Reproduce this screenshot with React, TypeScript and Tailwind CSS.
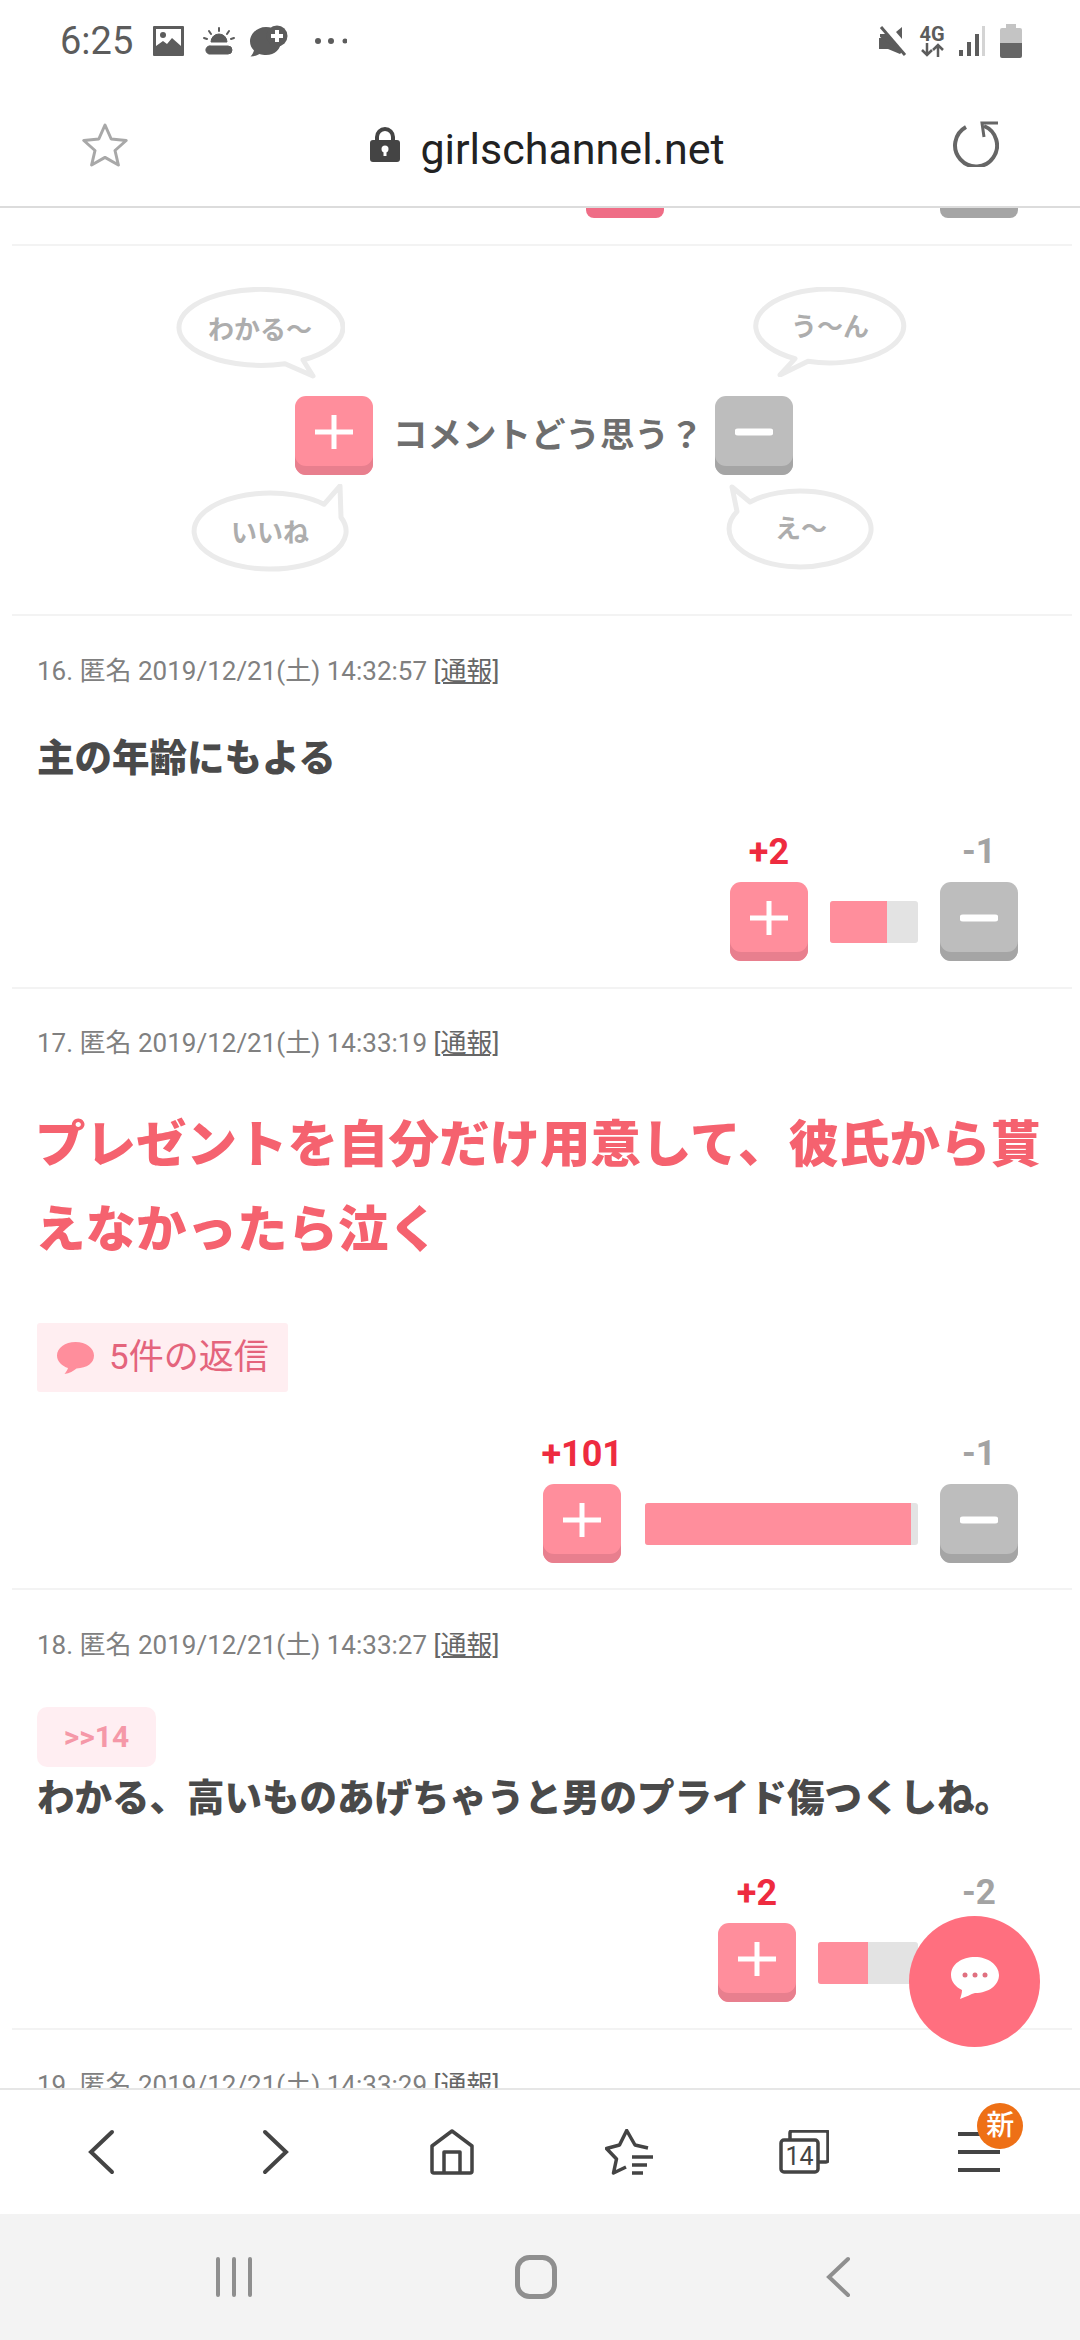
import type { ReactNode } from "react";

const fontStack = "font-['Roboto','Noto_Sans_CJK_JP',sans-serif]";

function StatusIcons() {
  return (
    <div className="flex h-[82px] items-center pl-[60px] pr-[58px] text-[#5c5c5c]">
      <span className="w-[72px] text-[38px] leading-none">6:25</span>
      <svg className="ml-[21px]" width="31" height="30" viewBox="0 0 31 30">
        <rect width="31" height="30" rx="1" fill="#5c5c5c" />
        <rect x="3" y="3" width="25" height="20" fill="#fff" />
        <circle cx="10" cy="9" r="3" fill="#5c5c5c" />
        <path d="M3 20l7-5 4 3 5-6 9 8v6H3z" fill="#5c5c5c" />
      </svg>
      <svg className="ml-[19px]" width="32" height="28" viewBox="0 0 32 28" fill="none" stroke="#5c5c5c">
        <path d="M8 15a8 8 0 0 1 16 0z" fill="#5c5c5c" strokeWidth="1" />
        <path d="M16 1v3M6 4l2 3M26 4l-2 3M1 11l3 1M31 11l-3 1" strokeWidth="2" strokeLinecap="round" />
        <path d="M4 17h24" stroke="#fff" strokeWidth="2" />
        <path d="M8 19h17a4 4 0 0 1 0 8H6a4 4 0 0 1 2-8z" fill="#5c5c5c" strokeWidth="1" />
      </svg>
      <svg className="ml-[15px]" width="38" height="32" viewBox="0 0 38 32">
        <path d="M16 2C7 2 0 9 0 16.500c0 3.500 1.500 6.500 4 9-.5 2-2 4.500-3.500 6 3.500 0 6.500-1 9-2.500 2 .7 4.500 1 6.500 1 9 0 15-6 15-14S25 2 16 2z" fill="#5c5c5c" />
        <circle cx="27" cy="11" r="10.500" fill="#5c5c5c" />
        <path d="M27 5v12M21 11h12" stroke="#fff" strokeWidth="4" />
      </svg>
      <svg className="ml-[25px]" width="34" height="8" viewBox="0 0 34 8" fill="#5c5c5c">
        <circle cx="5" cy="4" r="3" />
        <circle cx="18" cy="4" r="3" />
        <circle cx="32" cy="4" r="2.5" />
      </svg>
      <svg className="ml-auto" width="28" height="30" viewBox="0 0 28 30" fill="#5c5c5c">
        <path d="M0 12h8l15 14-2 2-12-5H0z" />
        <path d="M1 11V8h7l12 13 0 4z" />
        <path d="M17 6l6-5v12z" />
        <path d="M2 1l24 28" stroke="#5c5c5c" strokeWidth="3" />
      </svg>
      <div className="ml-[13px] flex w-[24px] flex-col items-center">
        <span className="text-[20px] font-bold leading-[17px]">4G</span>
        <svg width="24" height="14" viewBox="0 0 24 14" fill="none" stroke="#5c5c5c" strokeWidth="2.5">
          <path d="M7 0v12M2 7l5 5 5-5" />
          <path d="M18 14V2M13 7l5-5 5 5" />
        </svg>
      </div>
      <svg className="ml-[15px]" width="26" height="30" viewBox="0 0 26 30" fill="#5c5c5c">
        <rect x="0" y="24" width="4" height="6" />
        <rect x="8" y="16" width="4" height="14" />
        <rect x="16" y="8" width="4" height="22" />
        <rect x="23" y="0" width="3" height="30" fill="#d4d4d4" />
      </svg>
      <svg className="ml-[15px]" width="22" height="34" viewBox="0 0 22 34">
        <path d="M6 0h10v4h4a2 2 0 0 1 2 2v13H0V6a2 2 0 0 1 2-2h4z" fill="#c4c4c4" />
        <path d="M0 19h22v13a2 2 0 0 1-2 2H2a2 2 0 0 1-2-2z" fill="#666" />
      </svg>
    </div>
  );
}

function AddressBar() {
  return (
    <div className="flex h-[124px] items-center justify-between pl-[82px] pr-[81px]">
      <svg width="46" height="45" viewBox="0 0 46 45" fill="none" stroke="#a8a8a8" strokeWidth="3" strokeLinejoin="round">
        <path d="M23 3l6.2 14 15 1.5L33 28.5 36.4 43 23 35.4 9.6 43 13 28.5 1.8 18.5l15-1.5z" />
      </svg>
      <div className="ml-[14px] flex items-center">
        <svg width="30" height="35" viewBox="0 0 30 35">
          <path d="M7 15V10a8 8 0 0 1 16 0v5" fill="none" stroke="#444" strokeWidth="4" />
          <rect x="0" y="13" width="30" height="22" rx="3" fill="#444" />
          <circle cx="15" cy="22" r="3.5" fill="#fff" />
          <path d="M13.5 23h3v6h-3z" fill="#fff" />
        </svg>
        <span className="ml-[20px] whitespace-nowrap pt-[10px] text-[43px] leading-[50px] text-[#222]">girlschannel.net</span>
      </div>
      <svg width="46" height="46" viewBox="0 0 46 46" fill="none" stroke="#666" strokeWidth="4">
        <path d="M31 5A21 21 0 1 1 13 6" />
        <path d="M45 2H29l2 14" strokeWidth="3" />
      </svg>
    </div>
  );
}

function Bubble({ width, height, path, offset, children }: {
  width: number;
  height: number;
  path: string;
  offset: string;
  children: ReactNode;
}) {
  return (
    <div className="grid place-items-center">
      <svg className="col-start-1 row-start-1" width={width} height={height} viewBox={`0 0 ${width} ${height}`}>
        <path d={path} fill="#fff" stroke="#ebebeb" strokeWidth="5" strokeLinejoin="round" />
      </svg>
      <span className={`col-start-1 row-start-1 text-[26px] font-bold leading-none text-[#adadad] ${offset}`}>
        {children}
      </span>
    </div>
  );
}

function VoteButton({ kind }: { kind: "plus" | "minus" }) {
  const isPlus = kind === "plus";
  return (
    <div
      className={
        isPlus
          ? "flex h-[79px] w-[78px] items-center justify-center rounded-[11px] bg-[#ff8e9c] pb-[8px] shadow-[inset_0_-9px_0_#e87f8e]"
          : "flex h-[79px] w-[78px] items-center justify-center rounded-[11px] bg-[#bdbdbd] pb-[8px] shadow-[inset_0_-9px_0_#a5a5a5]"
      }
    >
      <svg width="38" height="36" viewBox="0 0 38 36" stroke="#fff" fill="none">
        {isPlus ? (
          <path d="M19 1v34M0 18h38" strokeWidth="5" />
        ) : (
          <path d="M3 18h32" strokeWidth="7" strokeLinecap="round" />
        )}
      </svg>
    </div>
  );
}

function VoteRow({ plus, minus, barWidth, fillWidth, hideMinus }: {
  plus: string;
  minus: string;
  barWidth: number;
  fillWidth: number;
  hideMinus?: boolean;
}) {
  return (
    <div className="flex items-end justify-end pr-[54px]">
      <div className="flex flex-col items-center">
        <span className="mb-[10px] h-[40px] whitespace-nowrap text-[36px] font-bold leading-[40px] text-[#ee2b3f]">{plus}</span>
        <VoteButton kind="plus" />
      </div>
      <div
        className="mx-[22px] mb-[18px] h-[42px] overflow-hidden rounded-[3px] bg-[#e3e3e3]"
        style={{ width: barWidth }}
      >
        <div className="h-full bg-[#ff8e9c]" style={{ width: fillWidth }} />
      </div>
      <div className="flex flex-col items-center">
        <span className="mb-[10px] h-[40px] whitespace-nowrap text-[35px] font-bold leading-[40px] text-[#a3a3a3]">{minus}</span>
        <div className={hideMinus ? "invisible" : ""}>
          <VoteButton kind="minus" />
        </div>
      </div>
    </div>
  );
}

function Meta({ no, time }: { no: number; time: string }) {
  return (
    <p className="h-[36px] whitespace-nowrap pt-[1px] text-[26px] leading-[36px] text-[#808080]">
      {no}. 匿名 2019/12/21(土) {time} <span className="text-[#666] underline">[通報]</span>
    </p>
  );
}

const divider = "border-b-2 border-[#f3f3f3]";

function NavBar() {
  return (
    <div className="grid h-[126px] grid-cols-6 place-items-center border-t-2 border-[#e6e6e6] bg-white px-[13px]">
      <svg width="28" height="46" viewBox="0 0 28 46" fill="none" stroke="#444" strokeWidth="4" strokeLinecap="round">
        <path d="M25 3L4 23l21 20" />
      </svg>
      <svg width="28" height="46" viewBox="0 0 28 46" fill="none" stroke="#444" strokeWidth="4" strokeLinecap="round">
        <path d="M3 3l21 20L3 43" />
      </svg>
      <svg width="44" height="46" viewBox="0 0 44 46" fill="none" stroke="#444" strokeWidth="3.5" strokeLinejoin="round">
        <path d="M22 2L2 17v25a2 2 0 0 0 2 2h36a2 2 0 0 0 2-2V17z" />
        <path d="M14 44V23h16v21" />
      </svg>
      <svg className="ml-[3px]" width="48" height="47" viewBox="0 0 48 47" fill="none" stroke="#444">
        <path d="M43 19l-13-3-8.300-14.500L14.500 16 1.500 19.500 11.500 30 8.500 44 21 38" strokeWidth="3.5" strokeLinejoin="round" />
        <path d="M27 28h21M27 36h15M27 44h11" strokeWidth="3.500" />
      </svg>
      <svg className="ml-[2px]" width="50" height="44" viewBox="0 0 50 44" fill="none" stroke="#444" strokeWidth="3.5">
        <path d="M11 9V3a2 2 0 0 1 2-2h34a2 2 0 0 1 2 2v27a2 2 0 0 1-2 2h-7" />
        <rect x="2" y="10" width="37" height="32" rx="3" />
        <text x="20.500" y="35" fontSize="25" textAnchor="middle" fill="#444" stroke="none" fontFamily="Roboto">14</text>
      </svg>
      <div className="relative">
        <svg className="block" width="42" height="42" viewBox="0 0 42 42" stroke="#444" strokeWidth="4">
          <path d="M0 3h42M0 21h42M0 39h42" />
        </svg>
        <span className="absolute left-[19px] top-[-28px] flex h-[46px] w-[46px] items-center justify-center rounded-full bg-[#ee7016] text-[28px] font-medium leading-none text-white">
          新
        </span>
      </div>
    </div>
  );
}

function SystemBar() {
  return (
    <div className="grid h-[126px] grid-cols-3 place-items-center bg-[#f3f3f3] pl-[83px] pr-[91px]">
      <svg width="38" height="40" viewBox="0 0 38 40" stroke="#8f8f8f" strokeWidth="4" strokeLinecap="round">
        <path d="M3 2v36M19 2v36M35 2v36" />
      </svg>
      <svg width="42" height="44" viewBox="0 0 42 44" fill="none" stroke="#8f8f8f" strokeWidth="5">
        <rect x="2.500" y="2.500" width="37" height="39" rx="12" />
      </svg>
      <svg width="26" height="42" viewBox="0 0 26 42" fill="none" stroke="#8f8f8f" strokeWidth="4" strokeLinecap="round">
        <path d="M23 3L4 21l19 18" />
      </svg>
    </div>
  );
}

export default function App() {
  return (
    <div className={`relative flex h-[2340px] w-[1080px] flex-col overflow-hidden bg-white ${fontStack}`}>
      <header className="border-b-2 border-[#dcdcdc]">
        <StatusIcons />
        <AddressBar />
      </header>

      <main className="min-h-0 flex-1 overflow-hidden">
        <div className="ml-[12px] mr-[8px]">
          <div className={`${divider} h-[38px]`}>
            <div className="flex h-[10px] justify-end pr-[54px]">
              <div className="h-full w-[78px] rounded-b-[8px] bg-[#ef6d86]" />
              <div className="ml-[276px] h-full w-[78px] rounded-b-[8px] bg-[#a5a5a5]" />
            </div>
          </div>

          {/* vote prompt */}
          <section className={`${divider} pb-[40px] pt-[41px]`}>
            <div className="flex pl-[163px]">
              <Bubble width={170} height={92} offset="mb-[7px]" path="M128 73L138 89L110 76.700A82 38 0 1 1 128 73Z">
                わかる〜
              </Bubble>
              <div className="ml-[408px]">
                <Bubble width={154} height={90} offset="mb-[11px]" path="M55 74.300L27 88L42 71.600A74 37 0 1 1 55 74.300Z">
                  う〜ん
                </Bubble>
              </div>
            </div>
            <div className="mt-[17px] flex items-center pl-[283px]">
              <VoteButton kind="plus" />
              <span className="ml-[20px] w-[322px] whitespace-nowrap text-[34.500px] font-bold leading-none text-[#6e6e6e]">
                コメントどう思う？
              </span>
              <VoteButton kind="minus" />
            </div>
            <div className="mt-[9px] flex pl-[179px]">
              <Bubble width={158} height={90} offset="mt-[8px]" path="M133 20.300L149 2L150 33.400A76 38 0 1 1 133 20.300Z">
                いいね
              </Bubble>
              <div className="ml-[377px]">
                <Bubble width={150} height={88} offset="mt-[2px]" path="M24 18A71 38 0 1 1 11 27.500L6 3Z">
                  え〜
                </Bubble>
              </div>
            </div>
          </section>

          <article className={`${divider} pb-[26px] pl-[25px] pt-[36px]`}>
            <Meta no={16} time="14:32:57" />
            <p className="mt-[38px] text-[37.500px] font-black leading-[64px] text-[#4a4a4a]">主の年齢にもよる</p>
            <div className="mt-[42px]">
              <VoteRow plus="+2" minus="-1" barWidth={88} fillWidth={57} />
            </div>
          </article>

          <article className={`${divider} pb-[25px] pl-[25px] pt-[35px]`}>
            <Meta no={17} time="14:33:19" />
            <p className="-ml-[2px] mt-[42px] text-[50.500px] font-black leading-[85px] text-[#f5626f]">
              プレゼントを自分だけ用意して、彼氏から貰えなかったら泣く
            </p>
            <div className="mt-[51px] flex h-[69px] w-[251px] items-center rounded-[3px] bg-[#ffeef1] pl-[20px]">
              <svg width="37" height="32" viewBox="0 0 37 32">
                <path d="M18.500 0C8 0 0 6 0 13.500c0 6 5 10.500 11 12.500-.5 2-2 4-3.500 6 5-.5 9-3 12-5.500C30 26 37 21 37 13.500 37 6 29 0 18.500 0z" fill="#ff8e9c" />
              </svg>
              <span className="ml-[15px] text-[35px] leading-none text-[#e4647c]">5件の返信</span>
            </div>
            <div className="mt-[42px]">
              <VoteRow plus="+101" minus="-1" barWidth={273} fillWidth={266} />
            </div>
          </article>

          <article className={`${divider} pb-[26px] pl-[25px] pt-[36px]`}>
            <Meta no={18} time="14:33:27" />
            <div className="mt-[45px] flex h-[60px] w-[119px] items-center justify-center rounded-[10px] bg-[#ffeef2] text-[30px] font-bold leading-none text-[#f598a8]">
              &gt;&gt;14
            </div>
            <p className="whitespace-nowrap text-[37.500px] font-black leading-[62px] text-[#4a4a4a]">
              わかる、高いものあげちゃうと男のプライド傷つくしね。
            </p>
            <div className="mt-[44px]">
              <VoteRow plus="+2" minus="-2" barWidth={100} fillWidth={50} hideMinus />
            </div>
          </article>

          <article className="pl-[25px] pt-[36px]">
            <Meta no={19} time="14:33:29" />
          </article>
        </div>
      </main>

      <NavBar />
      <SystemBar />

      <button
        type="button"
        className="absolute bottom-[293px] right-[40px] flex h-[131px] w-[131px] items-center justify-center rounded-full bg-[#ff6f7f]"
      >
        <svg className="mb-[8px]" width="50" height="44" viewBox="0 0 50 44">
          <path d="M25 1C12 1 1 8 1 19c0 7 5 12 11 15 0 3-1 6-2 9 6-2 11-5 15-6 14 0 24-8 24-18S38 1 25 1z" fill="#fff" />
          <circle cx="15" cy="19" r="2.500" fill="#e07080" />
          <circle cx="25" cy="19" r="2.500" fill="#e07080" />
          <circle cx="35" cy="19" r="2.500" fill="#e07080" />
        </svg>
      </button>
    </div>
  );
}
